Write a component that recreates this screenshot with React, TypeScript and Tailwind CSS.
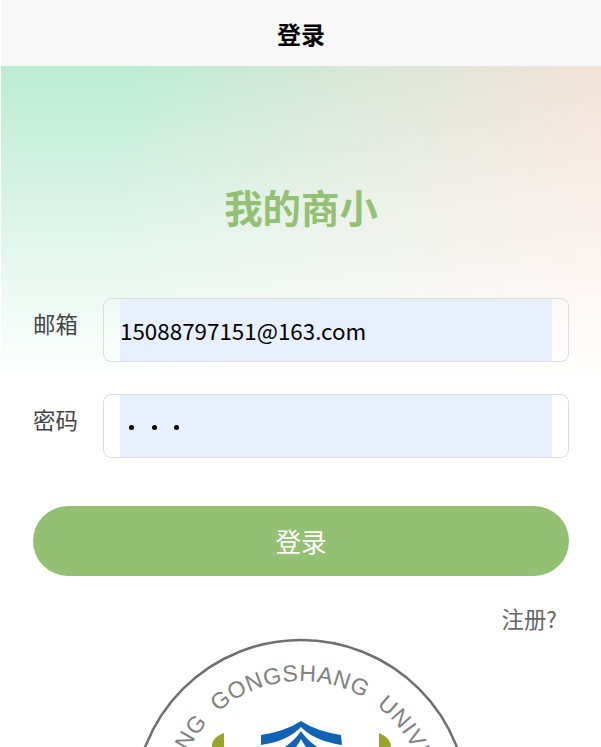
const FONT = "font-['Noto_Sans_CJK_SC','Noto_Sans',sans-serif]";

const Field = ({ label, children }: { label: string; children: React.ReactNode }) => (
  <div className="flex items-start">
    <label className="w-[70px] pt-[9px] text-[22.4px] leading-[33px] text-[#444]">{label}</label>
    <div className="flex-1 h-16 px-4 border border-[#dddddd] rounded-lg">
      <div className="h-full bg-[#e8f0fe] text-black">{children}</div>
    </div>
  </div>
);

const Dot = () => <span className="w-[5px] h-[5px] rounded-full bg-black" />;

const Logo = () => (
  <svg width="400" height="110" viewBox="0 0 400 110" className="block mx-auto">
    <defs>
      <path id="ring" d="M 74 170 A 126 126 0 0 1 326 170" />
    </defs>
    <circle cx="200" cy="170" r="167" fill="none" stroke="#6f6f6f" strokeWidth="2.5" />
    <text fontSize="23" fill="#808080" fontFamily="'Liberation Sans', sans-serif" letterSpacing="0.6">
      <textPath href="#ring" startOffset="14.5%">{"NG\u00a0\u00a0GONGSHANG\u00a0\u00a0UNIVE"}</textPath>
    </text>
    {/* roof of the crest */}
    <path d="M160 98 Q185 94 200 84 Q215 94 240 98 L241 108 Q215 104 202 92 L200 90 Q187 104 160 108 Z" fill="#0f62b4" />
    <path d="M184 110 Q195 102 200 94 Q205 102 216 110 Z" fill="#0f62b4" />
    <path d="M195 110 Q198 106 200 102 Q202 106 205 110 Z" fill="#fff" />
    {/* leaves */}
    <path d="M123 96 Q110 101 111 110 L123 110 Z" fill="#97a52c" />
    <path d="M278 96 Q290 101 290 110 L278 110 Z" fill="#97a52c" />
  </svg>
);

export default function App() {
  return (
    <div className={`h-screen overflow-hidden bg-white pl-px ${FONT}`}>
      {/* Header */}
      <header className="h-[66px] pt-px flex items-center justify-center bg-[#f8f8f8] text-2xl font-bold text-black">
        登录
      </header>

      <main className="bg-no-repeat bg-[length:100%_314px] bg-[linear-gradient(to_bottom,rgba(255,255,255,0)_0%,rgba(255,255,255,1)_100%),linear-gradient(100deg,#bcebd4_20%,#dde6d8_60%,#f8e2d9_100%)]">
        <h1 className="pt-[112px] h-[232px] text-center text-[38.4px] leading-[56px] font-bold text-[#93c072]">
          我的商小
        </h1>

        <form className="px-8 flex flex-col gap-8">
          <Field label="邮箱">
            <div className="pt-[13px] text-[22.4px] leading-[36px]">15088797151@163.com</div>
          </Field>
          <Field label="密码">
            <div className="flex gap-[17.5px] pl-[9px] pt-[30px]">
              <Dot />
              <Dot />
              <Dot />
            </div>
          </Field>

          <button type="button" className="mt-4 h-[70px] rounded-[35px] bg-[#93c072] text-white text-[25.6px]">
            登录
          </button>
        </form>

        <div className="mt-[26px] pr-[44px] text-right text-[22.4px] leading-[33px] text-[#666]">注册?</div>
        <div className="mt-[2px]"><Logo /></div>
      </main>
    </div>
  );
}
